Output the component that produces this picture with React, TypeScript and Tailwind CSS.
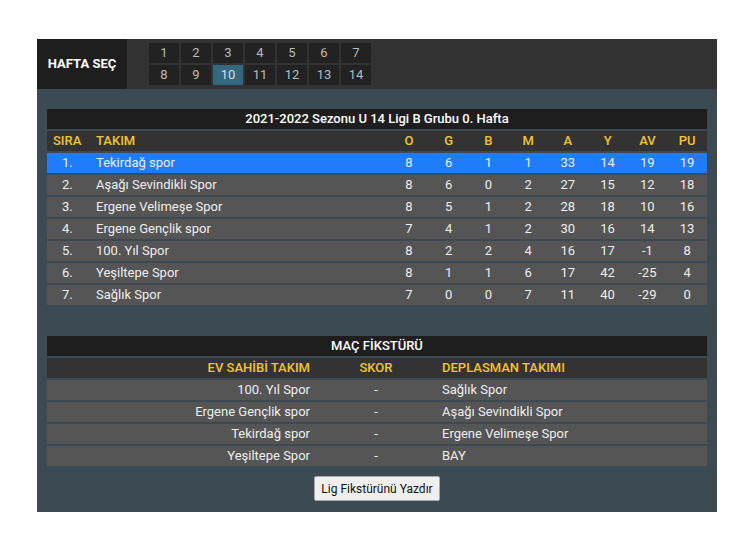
import React from 'react'

interface Row { name: string; o: number; g: number; b: number; m: number; a: number; y: number; av: number; pu: number }
interface Match { home: string; score: string; away: string }

const weeks = [[1, 2, 3, 4, 5, 6, 7], [8, 9, 10, 11, 12, 13, 14]]

const standings: Row[] = [
  { name: 'Tekirdağ spor', o: 8, g: 6, b: 1, m: 1, a: 33, y: 14, av: 19, pu: 19 },
  { name: 'Aşağı Sevindikli Spor', o: 8, g: 6, b: 0, m: 2, a: 27, y: 15, av: 12, pu: 18 },
  { name: 'Ergene Velimeşe Spor', o: 8, g: 5, b: 1, m: 2, a: 28, y: 18, av: 10, pu: 16 },
  { name: 'Ergene Gençlik spor', o: 7, g: 4, b: 1, m: 2, a: 30, y: 16, av: 14, pu: 13 },
  { name: '100. Yıl Spor', o: 8, g: 2, b: 2, m: 4, a: 16, y: 17, av: -1, pu: 8 },
  { name: 'Yeşiltepe Spor', o: 8, g: 1, b: 1, m: 6, a: 17, y: 42, av: -25, pu: 4 },
  { name: 'Sağlık Spor', o: 7, g: 0, b: 0, m: 7, a: 11, y: 40, av: -29, pu: 0 },
]

const fixtures: Match[] = [
  { home: '100. Yıl Spor', score: '-', away: 'Sağlık Spor' },
  { home: 'Ergene Gençlik spor', score: '-', away: 'Aşağı Sevindikli Spor' },
  { home: 'Tekirdağ spor', score: '-', away: 'Ergene Velimeşe Spor' },
  { home: 'Yeşiltepe Spor', score: '-', away: 'BAY' },
]

const statCols = ['O', 'G', 'B', 'M', 'A', 'Y', 'AV', 'PU']
const grid = 'grid grid-cols-[43px_299px_repeat(8,39.75px)] h-[20px] items-center'

export default function App() {
  return (
    <div className="min-h-[556px] bg-white pt-[39px] text-[13px] text-[#eeeeee]" style={{ fontFamily: 'Roboto, "Liberation Sans", sans-serif' }}>
      <div className="ml-[37px] w-[680px] bg-[#3c4a54] pb-[11px]">
        {/* week picker */}
        <div className="flex h-[50px] bg-[#333333]">
          <div className="flex w-[90px] items-center justify-center bg-[#1e1e1e] text-[13px] font-bold text-white">HAFTA SEÇ</div>
          <div className="ml-[22px] flex flex-col justify-center gap-[2px] pb-[1px]">
            {weeks.map((row, i) => (
              <div key={i} className="flex gap-[2px]">
                {row.map((w) => (
                  <div key={w} className={`flex h-[20px] w-[30px] items-center justify-center text-[13px] ${w === 10 ? 'bg-[#34687f] text-[#dddddd]' : 'bg-[#222222] text-[#bbbbbb]'}`}>{w}</div>
                ))}
              </div>
            ))}
          </div>
        </div>

        <div className="mx-[10px] mt-[20px] flex flex-col gap-[2px]">
          <div className="flex h-[20px] items-center justify-center bg-[#1e1e1e] font-medium text-white">2021-2022 Sezonu U 14 Ligi B Grubu 0. Hafta</div>
          <div className={`${grid} bg-[#333333] font-medium text-[#f5c431]`}>
            <div className="pl-[6px]">SIRA</div>
            <div className="pl-[6px]">TAKIM</div>
            {statCols.map((c) => <div key={c} className="text-center">{c}</div>)}
          </div>
          {standings.map((r, i) => (
            <div key={r.name} className={`${grid} ${i === 0 ? 'bg-[#1f7dfb]' : 'bg-[#555555]'}`}>
              <div className="pl-[15px]">{i + 1}.</div>
              <div className="pl-[6px]">{r.name}</div>
              {[r.o, r.g, r.b, r.m, r.a, r.y, r.av, r.pu].map((v, j) => <div key={j} className="text-center">{v}</div>)}
            </div>
          ))}
        </div>

        <div className="mx-[10px] mt-[31px] flex flex-col gap-[2px]">
          <div className="flex h-[20px] items-center justify-center bg-[#1e1e1e] font-medium text-white">MAÇ FİKSTÜRÜ</div>
          <div className="grid h-[20px] grid-cols-[269px_120px_1fr] items-center bg-[#333333] font-medium text-[#f5c431]">
            <div className="pr-[6px] text-right">EV SAHİBİ TAKIM</div>
            <div className="text-center">SKOR</div>
            <div className="pl-[6px]">DEPLASMAN TAKIMI</div>
          </div>
          {fixtures.map((f) => (
            <div key={f.home} className="grid h-[20px] grid-cols-[269px_120px_1fr] items-center bg-[#555555]">
              <div className="pr-[6px] text-right">{f.home}</div>
              <div className="text-center">{f.score}</div>
              <div className="pl-[6px]">{f.away}</div>
            </div>
          ))}
        </div>

        <div className="mt-[10px] flex justify-center">
          <button className="h-[25px] w-[126px] rounded-[2px] border border-[#aaaaaa] bg-[#efefef] text-[12px] text-[#111111]">Lig Fikstürünü Yazdır</button>
        </div>
      </div>
    </div>
  )
}
